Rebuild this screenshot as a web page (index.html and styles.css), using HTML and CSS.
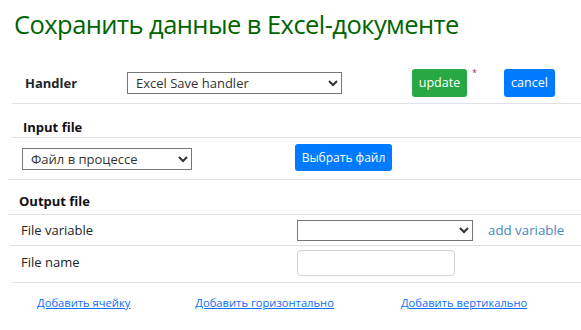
FILE: index.html
```html
<!DOCTYPE html>
<html lang="ru">
<head>
    <meta charset="UTF-8">
    <title>Сохранить данные в Excel-документе</title>
    <link rel="stylesheet" href="styles.css">
</head>
<body>
<main class="page">
    <h1 class="title">Сохранить данные в Excel-документе</h1>

    <div class="handler-row">
        <span class="handler-label">Handler</span>
        <select class="handler-select">
            <option>Excel Save handler</option>
        </select>
        <button class="btn btn-green btn-update">update</button>
        <span class="star">*</span>
        <button class="btn btn-blue btn-cancel">cancel</button>
    </div>

    <div class="section-head input-head">Input file</div>
    <div class="input-row">
        <select class="file-select">
            <option>Файл в процессе</option>
        </select>
        <button class="btn btn-blue btn-pick">Выбрать файл</button>
    </div>

    <div class="section-head output-head">Output file</div>
    <div class="field-row var-row">
        <span class="field-label">File variable</span>
        <select class="var-select">
            <option></option>
        </select>
        <a href="#" class="add-var">add variable</a>
    </div>
    <div class="field-row name-row">
        <span class="field-label">File name</span>
        <input type="text" class="name-input">
    </div>

    <div class="links">
        <a href="#">Добавить ячейку</a>
        <a href="#">Добавить горизонтально</a>
        <a href="#">Добавить вертикально</a>
    </div>
</main>
</body>
</html>
```

FILE: styles.css
```css
:root {
    --green: #28a745;
    --blue: #007bff;
    --line: #dee2e6;
    --text: #212529;
}

* {
    box-sizing: border-box;
}

body {
    margin: 0;
    font-family: 'Open Sans', sans-serif;
    color: var(--text);
    background: #fff;
}

.page {
    width: 581px;
}

.title {
    margin: 0;
    padding: 7px 0 0 14px;
    height: 62px;
    font-size: 25.5px;
    font-weight: 400;
    color: #006400;
    letter-spacing: -0.55px;
}

/* Handler */
.handler-row {
    margin-left: 12px;
    padding-left: 13px;
    height: 42px;
    display: flex;
    align-items: center;
    border-bottom: 1px solid var(--line);
}

.handler-label {
    width: 102px;
    font-size: 13px;
    font-weight: 700;
}

select {
    font-family: 'Open Sans', sans-serif;
    font-size: 13px;
    height: 22px;
    border: 1px solid #767676;
    border-radius: 0;
    background: #fff;
    color: #333;
    padding: 0 4px;
}

.handler-select {
    width: 215px;
}

.btn {
    border: none;
    border-radius: 3px;
    color: #fff;
    font-family: 'Open Sans', sans-serif;
    font-size: 12.5px;
    height: 28px;
    padding: 0;
    cursor: pointer;
}

.btn-green {
    background: var(--green);
}

.btn-blue {
    background: var(--blue);
}

.btn-update {
    width: 55px;
    margin-left: 70px;
}

.star {
    align-self: flex-start;
    margin: 4px 0 0 5px;
    width: 32px;
    font-size: 9px;
    color: #a0306a;
}

.btn-cancel {
    width: 51px;
}

/* Sections */
.section-head {
    font-size: 13px;
    font-weight: 700;
    color: #111;
    display: flex;
    align-items: center;
    border-bottom: 1px solid var(--line);
}

.input-head {
    margin-left: 12px;
    padding-left: 11px;
    height: 34px;
    padding-top: 12px;
}

.input-row {
    margin-left: 8px;
    padding-left: 14px;
    height: 42px;
    display: flex;
    align-items: center;
    border-bottom: 1px solid var(--line);
}

.file-select {
    width: 170px;
    margin-top: 0;
}

.btn-pick {
    margin-left: 103px;
    width: 97px;
    height: 27px;
    margin-top: -2px;
    font-size: 12px;
}

.output-head {
    margin-left: 8px;
    padding-left: 11px;
    height: 35px;
    padding-top: 8px;
}

.field-row {
    display: flex;
    align-items: center;
    border-bottom: 1px solid var(--line);
    padding-left: 11px;
}

.var-row {
    margin-left: 10px;
    height: 31px;
}

.name-row {
    margin-left: 12px;
    padding-left: 9px;
    height: 37px;
    align-items: flex-start;
    padding-top: 4px;
}

.name-row .field-label {
    padding-top: 3px;
}

.field-label {
    font-size: 13px;
    width: 276px;
}

.var-select {
    width: 176px;
    height: 21px;
}

.add-var {
    margin-left: 15px;
    font-size: 13.3px;
    color: #4a86c5;
    text-decoration: none;
}

.name-input {
    width: 158px;
    height: 26px;
    border: 1px solid #ced4da;
    border-radius: 4px;
}

/* Links */
.links {
    display: flex;
    padding: 12px 0 0 37px;
    font-size: 11.2px;
}

.links a {
    color: #0d6efd;
    text-decoration: underline;
}

.links a:nth-child(2) {
    margin-left: 65px;
}

.links a:nth-child(3) {
    margin-left: 67px;
}
```
